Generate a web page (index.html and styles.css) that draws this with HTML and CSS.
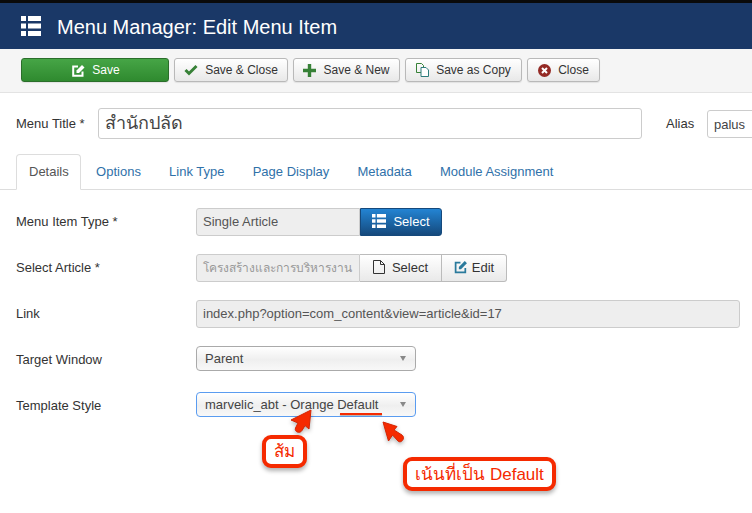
FILE: index.html
```html
<!DOCTYPE html>
<html lang="th">
<head>
<meta charset="utf-8">
<title>Menu Manager: Edit Menu Item</title>
<link rel="stylesheet" href="styles.css">
</head>
<body>
<div class="page">
  <header class="header">
    <svg class="header-icon" width="20" height="20" viewBox="0 0 20 20"><path fill="#fff" d="M0 0h5v5H0zM7 0h13v5H7zM0 7.500h5v5H0zM7 7.500h13v5H7zM0 15h5v5H0zM7 15h13v5H7z"/></svg>
    <h1 class="title">Menu Manager: Edit Menu Item</h1>
  </header>
  <div class="toolbar">
    <button class="btn btn-save"><svg class="ic" width="13" height="13" viewBox="0 0 13 13"><path fill="none" stroke="#fff" stroke-width="2" d="M10.500 7.500V11.800H1.200V2.500H6"/><path fill="#fff" d="M4.500 6.500L10 1l2.500 2.500-5.500 5.500H4.500z"/></svg>Save</button>
    <button class="btn btn-sc"><svg class="ic" width="14" height="12" viewBox="0 0 14 12"><path fill="none" stroke="#378137" stroke-width="3" d="M1.500 6l3.500 3.500L12.500 2"/></svg>Save &amp; Close</button>
    <button class="btn btn-sn"><svg class="ic" width="13" height="13" viewBox="0 0 13 13"><path fill="#378137" d="M4.800 0h3.400v4.800H13v3.400H8.200V13H4.800V8.200H0V4.800h4.800z"/></svg>Save &amp; New</button>
    <button class="btn btn-sa"><svg class="ic" width="13" height="14" viewBox="0 0 13 14"><path fill="none" stroke="#378137" d="M.5.500h5l2 2v7h-7z"/><path fill="#fff" stroke="#2f7d7d" d="M5 4.500h5l2.500 2.500v6.500H5z"/></svg>Save as Copy</button>
    <button class="btn btn-cl"><svg class="ic" width="13" height="13" viewBox="0 0 13 13"><circle cx="6.500" cy="6.500" r="6.500" fill="#942a25"/><path stroke="#fff" stroke-width="2" d="M4 4l5 5M9 4l-5 5"/></svg>Close</button>
  </div>
  <div class="title-row">
    <label class="lbl-title">Menu Title *</label>
    <div class="title-input">สำนักปลัด</div>
    <label class="lbl-alias">Alias</label>
    <div class="alias-input">palus</div>
  </div>
  <nav class="tabs">
    <a class="tab active">Details</a>
    <a class="tab">Options</a>
    <a class="tab">Link Type</a>
    <a class="tab">Page Display</a>
    <a class="tab">Metadata</a>
    <a class="tab">Module Assignment</a>
  </nav>
  <div class="form">
    <div class="row">
      <label class="lbl">Menu Item Type *</label>
      <div class="group">
        <div class="field w1">Single Article</div>
        <button class="gbtn gbtn-primary"><svg class="ic2" width="14" height="14" viewBox="0 0 20 20"><path fill="#fff" d="M0 0h5v5H0zM7 0h13v5H7zM0 7.500h5v5H0zM7 7.500h13v5H7zM0 15h5v5H0zM7 15h13v5H7z"/></svg>Select</button>
      </div>
    </div>
    <div class="row">
      <label class="lbl">Select Article *</label>
      <div class="group">
        <div class="field w2 muted">โครงสร้างและการบริหารงาน</div>
        <button class="gbtn gbtn-sel"><svg class="ic2" width="12" height="14" viewBox="0 0 12 14"><path fill="none" stroke="#333" d="M.5.500h7l4 4v9H.5zM7.500.500v4h4"/></svg>Select</button>
        <button class="gbtn gbtn-edit"><svg class="ic3" width="14" height="14" viewBox="0 0 13 13"><path fill="none" stroke="#2a7a9c" stroke-width="1.600" d="M10.500 7.500V11.500H1.500V2.500H6"/><path fill="#2a7a9c" d="M4.500 6.500L10 1l2 2-5.500 5.500H4.500z"/></svg>Edit</button>
      </div>
    </div>
    <div class="row">
      <label class="lbl">Link</label>
      <div class="field link">index.php?option=com_content&amp;view=article&amp;id=17</div>
    </div>
    <div class="row">
      <label class="lbl">Target Window</label>
      <div class="select">Parent<span class="caret"></span></div>
    </div>
    <div class="row">
      <label class="lbl">Template Style</label>
      <div class="select focus">marvelic_abt - Orange Default<span class="caret"></span>
        <span class="underline"></span>
      </div>
    </div>
  </div>
  <svg class="arrow a1" width="26" height="28" viewBox="0 0 26 28"><path fill="#f52a00" stroke="#d42400" d="M23 1L21 20L17 16.500L14 21.500C12 25 6 23 7.500 19L10 14L3 11Z"/></svg>
  <svg class="arrow a2" width="24" height="24" viewBox="0 0 24 24"><path fill="#f52a00" stroke="#d42400" d="M1 1L15 5.500L12 9L20 14C24 17 19 23 16 20L10.500 14L6.500 20Z"/></svg>
  <div class="note n1">ส้ม</div>
  <div class="note n2">เน้นที่เป็น Default</div>
</div>
</body>
</html>
```
FILE: styles.css
```css
* { box-sizing: border-box; }
html, body { margin: 0; padding: 0; background: #fff; }
body { width: 752px; height: 513px; overflow: hidden; font-family: "Liberation Sans", "Noto Sans", "DejaVu Sans", sans-serif; font-size: 13px; color: #333; }
.page { position: relative; width: 752px; height: 513px; overflow: hidden; }
.header { height: 49px; border-top: 3px solid #0a0a0a; background: #1a3867; display: flex; align-items: center; padding-left: 21px; }
.header-icon { flex: none; margin-right: 16px; }
.title { margin: 0; padding-top: 2px; font-size: 20px; font-weight: 400; color: #fff; line-height: 1; }
.toolbar { height: 44px; background: #f5f5f5; border-bottom: 1px solid #e3e3e3; display: flex; align-items: flex-start; padding: 9px 0 0 21px; gap: 5px; }
.btn { height: 24px; padding: 0; border: 1px solid #b9b9b9; border-radius: 3px; background: linear-gradient(#fff, #e8e8e8); display: flex; align-items: center; justify-content: center; font: 12px "Liberation Sans", sans-serif; color: #333; box-shadow: 0 1px 1px rgba(0,0,0,.08); }
.ic { margin-right: 7px; }
.btn-save { width: 148px; padding-left: 2px; background: linear-gradient(#46a546, #2f8a2f); border-color: #2a6e2a; color: #fff; }
.btn-sc { width: 114px; }
.btn-sn { width: 107px; }
.btn-sa { width: 117px; }
.btn-cl { width: 73px; }
.title-row { display: flex; align-items: center; height: 61px; padding-left: 16px; }
.lbl-title { width: 82px; flex: none; }
.title-input { width: 544px; height: 31px; flex: none; border: 1px solid #ccc; border-radius: 3px; padding: 0 6px; font-size: 18px; line-height: 29px; color: #444; }
.lbl-alias { margin-left: 24px; width: 41px; flex: none; }
.alias-input { width: 60px; height: 28px; flex: none; border: 1px solid #ccc; border-radius: 3px; padding: 0 6px; font-size: 13px; line-height: 28px; color: #444; }
.tabs { display: flex; margin: 0; height: 36px; padding-left: 16px; border-bottom: 1px solid #ddd; }
.tab { height: 36px; padding: 0 14.1px; line-height: 36px; color: #3071a9; font-size: 13px; }
.tab.active { width: 65px; margin-right: 1px; padding: 0 12px; color: #555; background: #fff; border: 1px solid #ddd; border-bottom-color: #fff; border-radius: 4px 4px 0 0; line-height: 34px; }
.form { padding: 18px 12px 0 16px; display: flex; flex-direction: column; gap: 18px; }
.row { display: flex; align-items: center; height: 28px; }
.lbl { width: 180px; flex: none; padding-bottom: 2px; }
.group { display: flex; }
.field { height: 28px; background: #eee; border: 1px solid #ccc; padding: 0 6px; line-height: 26px; color: #555; white-space: nowrap; overflow: hidden; font-size: 13px; border-radius: 3px 0 0 3px; }
.w1 { width: 164px; }
.w2 { width: 164px; }
.muted { color: #999; font-size: 12px; }
.link { width: 544px; border-radius: 3px; }
.gbtn { height: 28px; padding: 0 0 2px; display: flex; align-items: center; justify-content: center; font: 13px "Liberation Sans", sans-serif; color: #333; border: 1px solid #bbb; background: linear-gradient(#fff, #e9e9e9); }
.ic2 { margin-right: 7px; }
.ic3 { margin-right: 4px; }
.gbtn-primary { width: 82px; background: linear-gradient(#2384d3, #15497c); border-color: #15497c; color: #fff; border-radius: 0 3px 3px 0; }
.gbtn-sel { width: 82px; border-left: 0; }
.gbtn-edit { width: 65px; border-left: 0; border-radius: 0 3px 3px 0; }
.select { position: relative; align-self: flex-start; width: 220px; height: 25px; border: 1px solid #aaa; border-radius: 4px; background: linear-gradient(#fff, #efefef 55%, #f8f8f8); padding-left: 8px; line-height: 24px; font-size: 13px; color: #444; }
.select.focus { border-color: #5a9cf0; }
.caret { position: absolute; right: 9px; top: 9px; width: 0; height: 0; border-left: 3.5px solid transparent; border-right: 3.5px solid transparent; border-top: 5px solid #888; }
.underline { position: absolute; left: 143px; top: 20px; width: 42px; height: 2px; background: #f52a00; box-shadow: 0 1px 1px rgba(0,0,0,.3); }
.arrow { position: absolute; filter: drop-shadow(0 2px 2px rgba(0,0,0,.3)); }
.a1 { left: 288px; top: 409px; }
.a2 { left: 382px; top: 421px; }
.note { position: absolute; background: #fff; border: 4px solid #f52a00; border-radius: 9px; color: #f52a00; font-size: 17px; text-align: center; box-shadow: 0 3px 4px rgba(0,0,0,.3); }
.n1 { left: 262px; top: 435px; width: 45px; height: 33px; line-height: 26px; }
.n2 { left: 403px; top: 457px; width: 153px; height: 34px; line-height: 27px; }
```
